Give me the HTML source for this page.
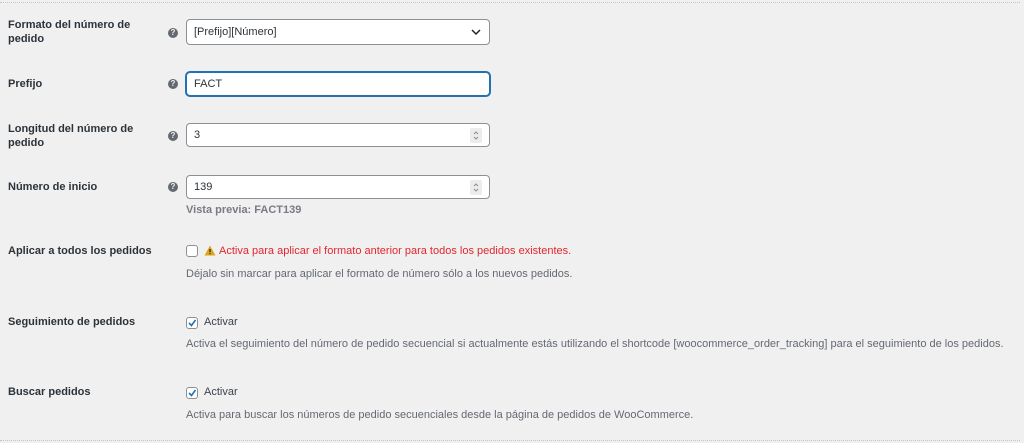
<!DOCTYPE html>
<html><head><meta charset="utf-8"><style>
body{margin:0;width:1024px;height:443px;background:#f0f0f1;font-family:"Liberation Sans",Arial,sans-serif;color:#1d2327;position:relative;overflow:hidden}
.a{position:absolute;white-space:nowrap}
.lb{font-weight:bold;font-size:11px;line-height:14px;color:#2c3338}
.h{width:10px;height:10px;border-radius:50%;background:#646970;color:#f0f0f1;font-size:8px;font-weight:bold;text-align:center;line-height:10px}
.in{background:#fff;border:1px solid #8c8f94;border-radius:4px;box-sizing:border-box;width:304px;font-size:11px;line-height:20px;padding-left:7px;color:#2c3338}
.d{font-size:11px;color:#646970}
.cb{width:12px;height:12px;border:1px solid #8c8f94;border-radius:3px;background:#fff;box-sizing:border-box}
.sp{position:absolute;right:7px;top:4px;width:12px;height:15px;background:#ececec;border-radius:2px}
.dot{position:absolute;left:0;width:1020px;border-top:1px dotted #c3c4c7}
</style></head><body>
<div class="dot" style="top:2px"></div>
<div class="dot" style="top:440px"></div>

<div class="a lb" style="left:8px;top:18px">Formato del número de<br>pedido</div>
<div class="a h" style="left:168px;top:28px">?</div>
<div class="a in" style="left:186px;top:19px;height:26px;line-height:24px">[Prefijo][Número]
<svg style="position:absolute;right:8px;top:9px" width="10" height="7" viewBox="0 0 10 7"><path d="M1 1l4 4 4-4" stroke="#1d2327" stroke-width="1.5" fill="none"/></svg></div>

<div class="a lb" style="left:8px;top:77px">Prefijo</div>
<div class="a h" style="left:168px;top:79px">?</div>
<div class="a in" style="left:186px;top:72px;height:24px;border:1px solid #2271b1;box-shadow:0 0 0 1px #2271b1;line-height:22px">FACT</div>

<div class="a lb" style="left:8px;top:122px">Longitud del número de<br>pedido</div>
<div class="a h" style="left:168px;top:131px">?</div>
<div class="a in" style="left:186px;top:123px;height:24px;line-height:22px">3<div class="sp"><svg width="12" height="15"><path d="M4 6l2-2 2 2M4 9l2 2 2-2" stroke="#8c8f94" fill="none"/></svg></div></div>

<div class="a lb" style="left:8px;top:180px">Número de inicio</div>
<div class="a h" style="left:168px;top:182px">?</div>
<div class="a in" style="left:186px;top:175px;height:24px;line-height:22px">139<div class="sp"><svg width="12" height="15"><path d="M4 6l2-2 2 2M4 9l2 2 2-2" stroke="#8c8f94" fill="none"/></svg></div></div>
<div class="a d" style="left:186px;top:204px;font-weight:bold;color:#787c82">Vista previa: FACT139</div>

<div class="a lb" style="left:8px;top:244px">Aplicar a todos los pedidos</div>
<div class="a cb" style="left:186px;top:245px"></div>
<svg class="a" style="left:204px;top:245px" width="12" height="11"><path d="M6 0.5L11.5 10.5H0.5Z" fill="#dba617"/><path d="M6 4v3.2M6 8.3v1" stroke="#1d2327" stroke-width="1.2"/></svg>
<div class="a" style="left:219px;top:245px;font-size:11px;color:#e3262e">Activa para aplicar el formato anterior para todos los pedidos existentes.</div>
<div class="a d" style="left:186px;top:268px">Déjalo sin marcar para aplicar el formato de número sólo a los nuevos pedidos.</div>

<div class="a lb" style="left:8px;top:315px">Seguimiento de pedidos</div>
<div class="a cb" style="left:186px;top:317px"><svg width="10" height="10" style="position:absolute;left:0;top:0"><path d="M2 5l2.5 2.5L8.5 2" stroke="#2271b1" stroke-width="1.6" fill="none"/></svg></div>
<div class="a" style="left:204px;top:316px;font-size:11px;color:#3c434a">Activar</div>
<div class="a d" style="left:186px;top:338px">Activa el seguimiento del número de pedido secuencial si actualmente estás utilizando el shortcode [woocommerce_order_tracking] para el seguimiento de los pedidos.</div>

<div class="a lb" style="left:8px;top:385px">Buscar pedidos</div>
<div class="a cb" style="left:186px;top:387px"><svg width="10" height="10" style="position:absolute;left:0;top:0"><path d="M2 5l2.5 2.5L8.5 2" stroke="#2271b1" stroke-width="1.6" fill="none"/></svg></div>
<div class="a" style="left:204px;top:386px;font-size:11px;color:#3c434a">Activar</div>
<div class="a d" style="left:186px;top:409px">Activa para buscar los números de pedido secuenciales desde la página de pedidos de WooCommerce.</div>
</body></html>
